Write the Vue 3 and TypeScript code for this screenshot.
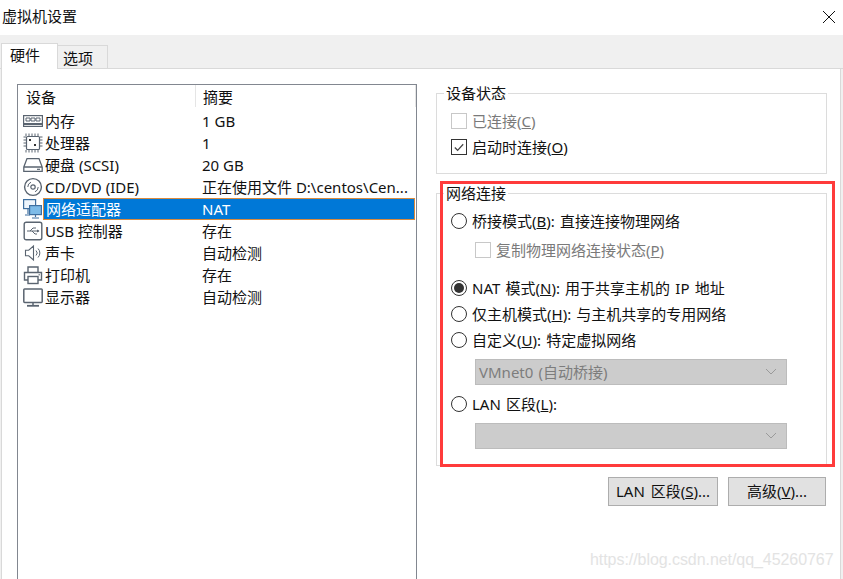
<script setup lang="ts">
interface Device { name: string; summary: string; icon: string; selected?: boolean }
const devices: Device[] = [
  { name: '内存', summary: '1 GB', icon: 'memory' },
  { name: '处理器', summary: '1', icon: 'cpu' },
  { name: '硬盘 (SCSI)', summary: '20 GB', icon: 'disk' },
  { name: 'CD/DVD (IDE)', summary: '正在使用文件 D:\\centos\\Cen...', icon: 'cd' },
  { name: '网络适配器', summary: 'NAT', icon: 'net', selected: true },
  { name: 'USB 控制器', summary: '存在', icon: 'usb' },
  { name: '声卡', summary: '自动检测', icon: 'sound' },
  { name: '打印机', summary: '存在', icon: 'printer' },
  { name: '显示器', summary: '自动检测', icon: 'display' }
]
</script>

<template>
  <div class="window">
    <header class="titlebar">
      <span class="title">虚拟机设置</span>
      <svg class="close" width="14" height="14" viewBox="0 0 14 14"><path d="M1 1l12 12M13 1L1 13" stroke="#111" stroke-width="1" fill="none" /></svg>
    </header>
    <nav class="tabstrip">
      <div class="tab active">硬件</div>
      <div class="tab">选项</div>
    </nav>
    <main class="panel">
      <section class="list">
        <div class="list-head">
          <div class="col-name">设备</div>
          <div class="col-sum">摘要</div>
        </div>
        <div v-for="d in devices" :key="d.name" class="row">
          <svg class="icon" width="20" height="20" viewBox="0 0 20 20" fill="none" stroke="#5a6470" stroke-width="1.2">
            <template v-if="d.icon === 'memory'">
              <rect x="0.6" y="4.6" width="18.8" height="10.8" fill="#fff" stroke-width="1.2" />
              <path d="M3 7h4v3H3zM8 7h4v3H8zM13 7h4v3h-4z" stroke-width="1" />
              <path d="M1 13h18" stroke-width="2" />
            </template>
            <template v-else-if="d.icon === 'cpu'">
              <rect x="3.5" y="3.5" width="13" height="13" rx="1" />
              <path d="M3 0.5v2.5M6 0.5v2.5M9 0.5v2.5M12 0.5v2.5M15 0.5v2.5M3 17v2.5M6 17v2.5M9 17v2.5M12 17v2.5M15 17v2.5M0.5 4h2.5M0.5 7h2.5M0.5 10h2.5M0.5 13h2.5M17 4h2.5M17 7h2.5M17 10h2.5M17 13h2.5" stroke-width="1" />
              <rect x="6" y="6" width="2" height="2" fill="#333" stroke="none" />
              <rect x="11" y="11" width="2" height="2" fill="#333" stroke="none" />
            </template>
            <template v-else-if="d.icon === 'disk'">
              <path d="M0.8 12L4 3.6h12l3.2 8.4v4.4H0.8zM0.8 12h18.4" stroke-width="1.3" />
              <path d="M14 14.3h3" stroke-width="1.2" />
            </template>
            <template v-else-if="d.icon === 'cd'">
              <circle cx="10" cy="10" r="8.4" stroke-width="1.4" />
              <circle cx="10" cy="10" r="2.2" />
              <path d="M4.8 10a5.2 5.2 0 0 1 3.2-4.8M15.2 10a5.2 5.2 0 0 1-3.2 4.8" stroke-width="1" />
            </template>
            <template v-else-if="d.icon === 'net'">
              <rect x="0.6" y="0.6" width="12" height="9" fill="#eef5fc" stroke="#3f6f9f" />
              <rect x="6.6" y="6.6" width="11.8" height="9" fill="#7dbbe8" stroke="#3f6f9f" />
              <path d="M12.5 15.6v2.5M9 19h7M5 10v5M2 16h5" stroke="#3f6f9f" />
            </template>
            <template v-else-if="d.icon === 'usb'">
              <rect x="1.2" y="1.2" width="17.6" height="17.6" rx="2" stroke-width="1.4" />
              <path d="M4 10h12M7 10l3-3h3M9 10l3 3h2" stroke-width="1" />
              <path d="M16.5 10l-2.5-1.5v3z" fill="#5a6470" stroke="none" />
            </template>
            <template v-else-if="d.icon === 'sound'">
              <path d="M2.5 7.2h3.2l4.8-4.2v14l-4.8-4.2H2.5z" stroke-width="1.1" />
              <path d="M13 7.5a3.5 3.5 0 0 1 0 5M15 5.5a6.4 6.4 0 0 1 0 9" stroke-width="1" />
            </template>
            <template v-else-if="d.icon === 'printer'">
              <path d="M5 7V2h10v5M5 15H1.5V7.5h17V15H15" stroke-width="1.4" />
              <rect x="5" y="11.5" width="10" height="7" stroke-width="1.4" />
              <path d="M15.5 9.8h1.5" stroke-width="1" />
            </template>
            <template v-else>
              <rect x="0.8" y="2" width="18.4" height="13.4" rx="0.8" stroke-width="1.5" />
              <path d="M10 15.5v2.5" stroke-width="1.5" />
              <path d="M4 18.8h12" stroke-width="1.8" />
            </template>
          </svg>
          <div class="name" :class="{ sel: d.selected }">{{ d.name }}</div>
          <div class="sum" :class="{ sel: d.selected }">{{ d.summary }}</div>
        </div>
      </section>

      <aside class="side">
        <fieldset class="group first">
          <legend>设备状态</legend>
          <div class="opt disabled"><i class="check" />已连接(<u>C</u>)</div>
          <div class="opt">
            <i class="check on">
              <svg width="15" height="15" viewBox="0 0 15 15"><path d="M3 7.5l3 3 6-6.5" stroke="#444" stroke-width="1.3" fill="none" /></svg>
            </i>启动时连接(<u>O</u>)
          </div>
        </fieldset>

        <fieldset class="group second">
          <legend>网络连接</legend>
          <div class="opt"><i class="radio" />桥接模式(<u>B</u>): 直接连接物理网络</div>
          <div class="opt sub disabled"><i class="check" />复制物理网络连接状态(<u>P</u>)</div>
          <div class="opt nat"><i class="radio on" />NAT 模式(<u>N</u>): 用于共享主机的 IP 地址</div>
          <div class="opt"><i class="radio" />仅主机模式(<u>H</u>): 与主机共享的专用网络</div>
          <div class="opt"><i class="radio" />自定义(<u>U</u>): 特定虚拟网络</div>
          <div class="select">
            <span>VMnet0 (自动桥接)</span>
            <svg width="12" height="8" viewBox="0 0 12 8"><path d="M1 1l5 5 5-5" stroke="#9a9a9a" fill="none" /></svg>
          </div>
          <div class="opt lan"><i class="radio" />LAN 区段(<u>L</u>):</div>
          <div class="select">
            <span></span>
            <svg width="12" height="8" viewBox="0 0 12 8"><path d="M1 1l5 5 5-5" stroke="#9a9a9a" fill="none" /></svg>
          </div>
        </fieldset>

        <div class="buttons">
          <button class="btn lan-btn">LAN 区段(<u>S</u>)...</button>
          <button class="btn adv-btn">高级(<u>V</u>)...</button>
        </div>
      </aside>
    </main>
    <div class="redbox" />
    <div class="watermark">https://blog.csdn.net/qq_45260767</div>
  </div>
</template>

<style>
html, body { margin: 0; background: #fff; }
</style>

<style scoped>
.window {
  position: relative;
  width: 843px;
  height: 579px;
  overflow: hidden;
  background: #f0f0f0;
  color: #111;
  font: 15px/20px "Noto Sans", "Noto Sans CJK SC", sans-serif;
  display: flex;
  flex-direction: column;
}
.titlebar {
  height: 35px;
  background: #fff;
  display: flex;
  align-items: center;
  justify-content: space-between;
  padding: 0 7px 3px 2px;
  box-sizing: border-box;
  flex: none;
}
.close { position: relative; top: 1px; }
.title { font-size: 15px; }
.tabstrip {
  height: 34px;
  flex: none;
  display: flex;
  align-items: flex-end;
  padding-left: 1px;
  box-sizing: border-box;
  border-bottom: 1px solid #d9d9d9;
}
.tab {
  width: 50px;
  height: 23px;
  box-sizing: border-box;
  border: 1px solid #d9d9d9;
  border-bottom: 0;
  border-left: 0;
  padding-left: 5px;
  line-height: 24px;
}
.tab.active {
  width: 57px;
  height: 26px;
  margin-bottom: -1px;
  background: #fff;
  border-left: 1px solid #d9d9d9;
  padding-left: 8px;
  line-height: 22px;
}
.panel {
  flex: 1;
  width: 840px;
  box-sizing: border-box;
  margin-left: 1px;
  background: #fff;
  border-left: 1px solid #d9d9d9;
  border-right: 1px solid #d9d9d9;
  padding: 14px 0 0 15px;
  display: flex;
  min-height: 0;
}
.list {
  width: 400px;
  height: 520px;
  margin-top: 1px;
  flex: none;
  box-sizing: border-box;
  border: 1px solid #828790;
}
.list-head {
  height: 25px;
  display: flex;
  line-height: 24px;
}
.col-name {
  width: 178px;
  box-sizing: border-box;
  padding-left: 8px;
  border-right: 1px solid #e5e5e5;
  height: 22px;
}
.col-sum {
  flex: 1;
  padding-left: 7px;
  border-right: 1px solid #e5e5e5;
  height: 22px;
}
.row {
  height: 22px;
  display: flex;
  align-items: center;
  white-space: nowrap;
}
.icon { margin: 0 2px 0 5px; flex: none; }
.name {
  width: 150px;
  height: 22px;
  line-height: 22px;
  box-sizing: border-box;
  flex: none;
}
.sum {
  flex: 1;
  height: 22px;
  line-height: 22px;
  padding-left: 7px;
  color: #111;
}
.sel { background: #0078d7; color: #fff; box-sizing: border-box; }
.name.sel {
  width: 152px;
  margin-left: -2px;
  padding-left: 2px;
  border: 1px solid #d98a3e;
  border-right: 0;
  line-height: 20px;
}
.sum.sel {
  border: 1px solid #d98a3e;
  border-left: 0;
  line-height: 20px;
  margin-right: 1px;
}
.side {
  width: 391px;
  margin-left: 19px;
  flex: none;
}
.group {
  margin: 0;
  padding: 5px 0 0 14px;
  border: 1px solid #dcdcdc;
  min-width: 0;
  box-sizing: border-box;
}
.group legend {
  padding: 0 2px;
  margin-left: -7px;
  line-height: 20px;
}
.first { height: 91px; }
.second { height: 283px; margin-top: 9px; padding-top: 5px; word-spacing: 1.3px; }
.opt {
  height: 26px;
  display: flex;
  align-items: center;
  white-space: pre;
}
.opt.sub { margin: 3px 0 0 24px; }
.opt.nat { margin-top: 12px; }
.opt.lan { margin-top: 6px; }
.disabled { color: #7a7a7a; }
.check {
  width: 16px;
  height: 16px;
  box-sizing: border-box;
  border: 1px solid #333;
  margin-right: 5px;
  flex: none;
  display: flex;
  align-items: center;
  justify-content: center;
  background: #fff;
}
.disabled .check { border-color: #c8c8c8; }
.radio {
  width: 16px;
  height: 16px;
  box-sizing: border-box;
  border: 1px solid #333;
  border-radius: 50%;
  margin-right: 5px;
  flex: none;
  position: relative;
}
.radio.on::after {
  content: "";
  position: absolute;
  inset: 2px;
  border-radius: 50%;
  background: #333;
}
.select {
  width: 312px;
  height: 26px;
  margin: 6px 0 0 24px;
  box-sizing: border-box;
  border: 1px solid #bcbcbc;
  background: #cccccc;
  color: #7d7d7d;
  display: flex;
  align-items: center;
  justify-content: space-between;
  padding: 0 9px 0 3px;
}
.buttons {
  display: flex;
  justify-content: flex-end;
  gap: 10px;
  padding-right: 1px;
  margin-top: 11px;
}
.btn {
  height: 29px;
  box-sizing: border-box;
  border: 1px solid #adadad;
  background: #e1e1e1;
  padding: 0 0 2px;
  color: #111;
  font: inherit;
  word-spacing: 2px;
}
.lan-btn { width: 110px; }
.adv-btn { width: 98px; }
.redbox {
  position: absolute;
  left: 440px;
  top: 181px;
  width: 395px;
  height: 286px;
  box-sizing: border-box;
  border: 3px solid #ff3b3b;
  pointer-events: none;
}
.watermark {
  position: absolute;
  left: 590px;
  top: 551px;
  font: 16px/18px "Liberation Sans", sans-serif;
  letter-spacing: -0.06px;
  color: #e3e3e3;
  white-space: nowrap;
}
</style>
